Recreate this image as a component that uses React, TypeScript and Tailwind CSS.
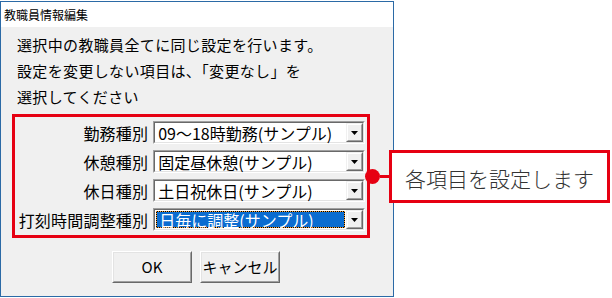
import React from "react";

const FONT = { fontFamily: '"Noto Sans CJK JP", "Noto Sans", sans-serif' };

function Arrow() {
  return (
    <svg width="7" height="4" viewBox="0 0 7 4">
      <path d="M0 0 H7 L3.5 4 Z" fill="#000" />
    </svg>
  );
}

function Combo({ text, selected }: { text: string; selected?: boolean }) {
  return (
    <div className="w-[213px] h-[23px] border border-t-[#a0a0a0] border-l-[#a0a0a0] border-r-white border-b-white">
      <div className="h-full flex bg-white border border-t-[#696969] border-l-[#696969] border-r-[#e3e3e3] border-b-[#e3e3e3]">
        {selected ? (
          <div className="flex-1 m-[1px] bg-black border border-dotted border-[#f5a23a]">
            <div className="h-full bg-[#0a6cd0] text-white text-[16px] leading-none flex items-center pl-[2px] whitespace-nowrap">
              {text}
            </div>
          </div>
        ) : (
          <div className="flex-1 text-[16px] leading-none flex items-center pl-[3px] text-black whitespace-nowrap">
            {text}
          </div>
        )}
        <div className="w-[17px] h-full border border-t-[#f0f0f0] border-l-[#f0f0f0] border-r-[#696969] border-b-[#696969]">
          <div className="h-full bg-[#f0f0f0] border border-t-white border-l-white border-r-[#a0a0a0] border-b-[#a0a0a0] flex items-center justify-center">
            <Arrow />
          </div>
        </div>
      </div>
    </div>
  );
}

function Btn({ label }: { label: string }) {
  return (
    <div className="w-[80px] h-[32px] border border-t-white border-l-white border-r-[#696969] border-b-[#696969]">
      <div className="h-full bg-[#f0f0f0] border border-t-[#e3e3e3] border-l-[#e3e3e3] border-r-[#a0a0a0] border-b-[#a0a0a0] flex items-center justify-center text-[15px] text-black">
        {label}
      </div>
    </div>
  );
}

const rows = [
  { label: "勤務種別", value: "09〜18時勤務(サンプル)" },
  { label: "休憩種別", value: "固定昼休憩(サンプル)" },
  { label: "休日種別", value: "土日祝休日(サンプル)" },
  { label: "打刻時間調整種別", value: "日毎に調整(サンプル)", selected: true },
];

export default function App() {
  return (
    <div className="w-[612px] h-[298px] bg-white relative overflow-hidden" style={FONT}>
      <div className="mt-[1px] w-[394px] h-[296px] border border-[#2b6aa6] flex flex-col">
        <div className="h-[25px] bg-white flex items-center pl-[3px] text-[12px] text-black">
          教職員情報編集
        </div>
        <div className="flex-1 bg-[#f0f0f0] flex flex-col">
          <div className="pt-[5px] pl-[16px] text-[15px] leading-[26px] tracking-[0.35px] text-black">
            <div>選択中の教職員全てに同じ設定を行います。</div>
            <div>設定を変更しない項目は、「変更なし」を</div>
            <div>選択してください</div>
          </div>
          <div className="mt-[4px] ml-[11px] w-[358px] h-[124px] border-[3px] border-[#e60012] px-[2px] py-[4px] flex flex-col gap-[6px]">
            {rows.map((r) => (
              <div key={r.label} className="flex items-center gap-[5px]">
                <div className="w-[132px] text-right text-[16px] leading-none tracking-[0.2px] text-black whitespace-nowrap">
                  {r.label}
                </div>
                <Combo text={r.value} selected={r.selected} />
              </div>
            ))}
          </div>
          <div className="mt-[13px] ml-[111px] flex gap-[8px]">
            <Btn label="OK" />
            <Btn label="キャンセル" />
          </div>
        </div>
      </div>

      <div className="absolute left-[365px] top-[150px] h-[53px] flex items-center">
        <div className="w-[15px] h-[15px] rounded-full bg-[#e60012]" />
        <div className="w-[9px] h-[3px] bg-[#e60012]" />
        <div className="w-[221px] h-[53px] border-[3px] border-[#e60012] bg-white flex items-center justify-center pt-[4px] text-[21px] font-light text-[#333333] leading-none">
          各項目を設定します
        </div>
      </div>
    </div>
  );
}
